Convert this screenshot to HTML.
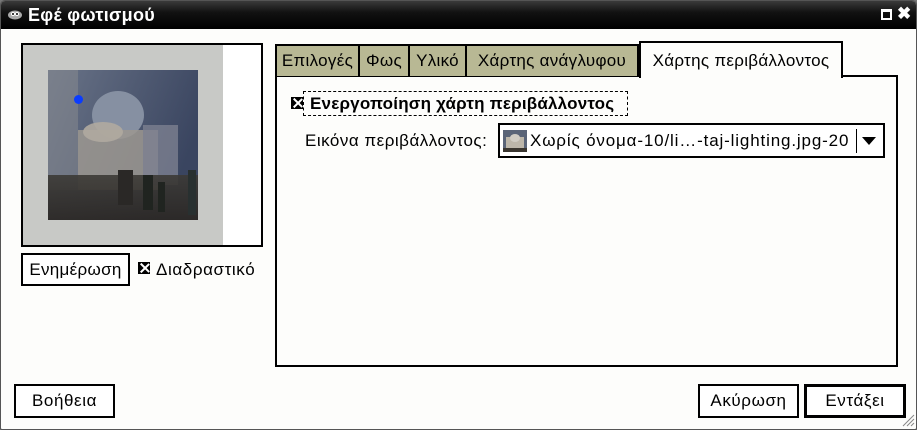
<!DOCTYPE html>
<html><head><meta charset="utf-8"><style>
*{margin:0;padding:0;box-sizing:border-box}
body{width:917px;height:430px;background:#777;font-family:"Liberation Sans",sans-serif;font-size:17px;letter-spacing:0.6px;color:#000;position:relative;overflow:hidden}
.win{position:absolute;left:0;top:0;width:917px;height:430px;background:#fdfdfb;border:1px solid #555;border-radius:5px 5px 2px 2px;overflow:hidden}
.title{position:absolute;left:0;top:0;width:917px;height:28px;background:linear-gradient(#3a3a3a,#121212 40%,#000);color:#fff;font-weight:bold;font-size:18px;letter-spacing:0.3px;line-height:28px;padding-left:27px}
.abs{position:absolute;white-space:nowrap}
.btn{position:absolute;border:2px solid #000;background:#fff;text-align:center}
.tab{position:absolute;top:43px;height:32px;background:#b8b894;border:2px solid #000;border-bottom:none;line-height:30px;text-align:center;white-space:nowrap;letter-spacing:0.3px}
.cb{position:absolute;width:12px;height:12px;border:1px solid #000;background:#000}
.cb:before,.cb:after{content:"";position:absolute;left:5px;top:-1px;width:1.6px;height:12px;background:#fff}
.cb:before{transform:rotate(45deg)}.cb:after{transform:rotate(-45deg)}
</style></head><body>
<div class="win">
<div class="title">Εφέ φωτισμού</div>
<svg class="abs" style="left:6px;top:8px" width="16" height="11"><ellipse cx="8" cy="6" rx="7" ry="4.5" fill="#aaa"/><circle cx="6" cy="5" r="2" fill="#fff"/><circle cx="10" cy="5" r="2" fill="#fff"/><circle cx="6" cy="5" r="1" fill="#000"/><circle cx="10" cy="5" r="1" fill="#000"/></svg>
<div class="abs" style="left:880px;top:8px;width:11px;height:11px;border:2px solid #fff;border-top-width:3px"></div>
<div class="abs" style="left:896px;top:3px;color:#fff;font-weight:bold;font-size:17px;line-height:20px">✖</div>

<div class="abs" style="left:20px;top:42px;width:242px;height:204px;border:2px solid #000;background:#fff">
<div class="abs" style="left:0;top:0;width:200px;height:200px;background:#c8c9c6"></div>
<svg class="abs" style="left:25px;top:25px" width="150" height="150">
<defs><linearGradient id="sky" x1="0" y1="0" x2="1" y2="0.4"><stop offset="0" stop-color="#6a7488"/><stop offset="1" stop-color="#3a4560"/></linearGradient>
<linearGradient id="gr" x1="0" y1="0" x2="0" y2="1"><stop offset="0" stop-color="#3c3a36"/><stop offset="1" stop-color="#2a2622"/></linearGradient></defs>
<rect width="150" height="150" fill="url(#sky)"/>
<rect x="0" y="0" width="30" height="120" fill="#8a8c90" opacity=".5"/>
<ellipse cx="70" cy="45" rx="26" ry="24" fill="#8690a2"/>
<rect x="30" y="60" width="80" height="60" fill="#9c9890" opacity=".85"/>
<ellipse cx="55" cy="62" rx="20" ry="10" fill="#b0aaa0" opacity=".9"/>
<rect x="95" y="55" width="35" height="60" fill="#7c8090" opacity=".8"/>
<rect x="0" y="105" width="150" height="45" fill="url(#gr)" opacity=".9"/>
<rect x="95" y="105" width="10" height="35" fill="#202420"/><rect x="110" y="112" width="7" height="30" fill="#202420"/><rect x="140" y="100" width="8" height="45" fill="#283030"/>
<rect x="70" y="100" width="15" height="35" fill="#2a2826"/>
</svg>
<div class="abs" style="left:51px;top:50px;width:9px;height:9px;border-radius:50%;background:#0a3cff"></div>
</div>

<div class="btn" style="left:20px;top:252px;width:109px;height:33px;line-height:29px;letter-spacing:0.3px">Ενημέρωση</div>
<div class="cb" style="left:137px;top:261px"></div>
<div class="abs" style="left:155px;top:259px">Διαδραστικό</div>

<div class="abs" style="left:274px;top:74px;width:623px;height:292px;border:2px solid #000;background:#fdfdfb"></div>
<div class="tab" style="left:274px;width:85px">Επιλογές</div>
<div class="tab" style="left:357px;width:52px">Φως</div>
<div class="tab" style="left:407px;width:59px">Υλικό</div>
<div class="tab" style="left:464px;width:174px">Χάρτης ανάγλυφου</div>
<div class="tab" style="left:638px;top:40px;height:37px;width:204px;background:#fdfdfb;line-height:36px">Χάρτης περιβάλλοντος</div>

<div class="cb" style="left:290px;top:96px"></div>
<div class="abs" style="left:302px;top:90px;width:325px;height:25px;border:1px dashed #000;font-weight:bold;line-height:23px;padding-left:6px;letter-spacing:0.2px">Ενεργοποίηση χάρτη περιβάλλοντος</div>
<div class="abs" style="left:304px;top:130px;letter-spacing:0.5px">Εικόνα περιβάλλοντος:</div>
<div class="abs" style="left:497px;top:122px;width:387px;height:35px;border:2px solid #000;background:#fff">
<svg class="abs" style="left:3px;top:5px" width="24" height="22"><rect width="24" height="22" fill="#5a6478"/><rect x="3" y="7" width="18" height="12" fill="#bcb6aa"/><ellipse cx="12" cy="8" rx="5" ry="4" fill="#d0ccc4"/><rect y="18" width="24" height="4" fill="#3a3630"/></svg>
<div class="abs" style="left:30px;top:6px;letter-spacing:0.85px">Χωρίς όνομα-10/li…-taj-lighting.jpg-20</div>
<div class="abs" style="left:356px;top:4px;width:1px;height:24px;background:#000"></div>
<svg class="abs" style="left:362px;top:12px" width="14" height="9"><path d="M0 0H14L7 8Z" fill="#000"/></svg>
</div>

<div class="btn" style="left:13px;top:383px;width:101px;height:34px;line-height:30px">Βοήθεια</div>
<div class="btn" style="left:697px;top:383px;width:101px;height:34px;line-height:30px">Ακύρωση</div>
<div class="btn" style="left:803px;top:383px;width:102px;height:34px;line-height:28px;border-width:3px">Εντάξει</div>
<svg class="abs" style="left:900px;top:412px" width="14" height="14"><path d="M13 2L2 13M13 6L6 13M13 10L10 13" stroke="#888" stroke-width="1"/></svg>
</div>
</body></html>
